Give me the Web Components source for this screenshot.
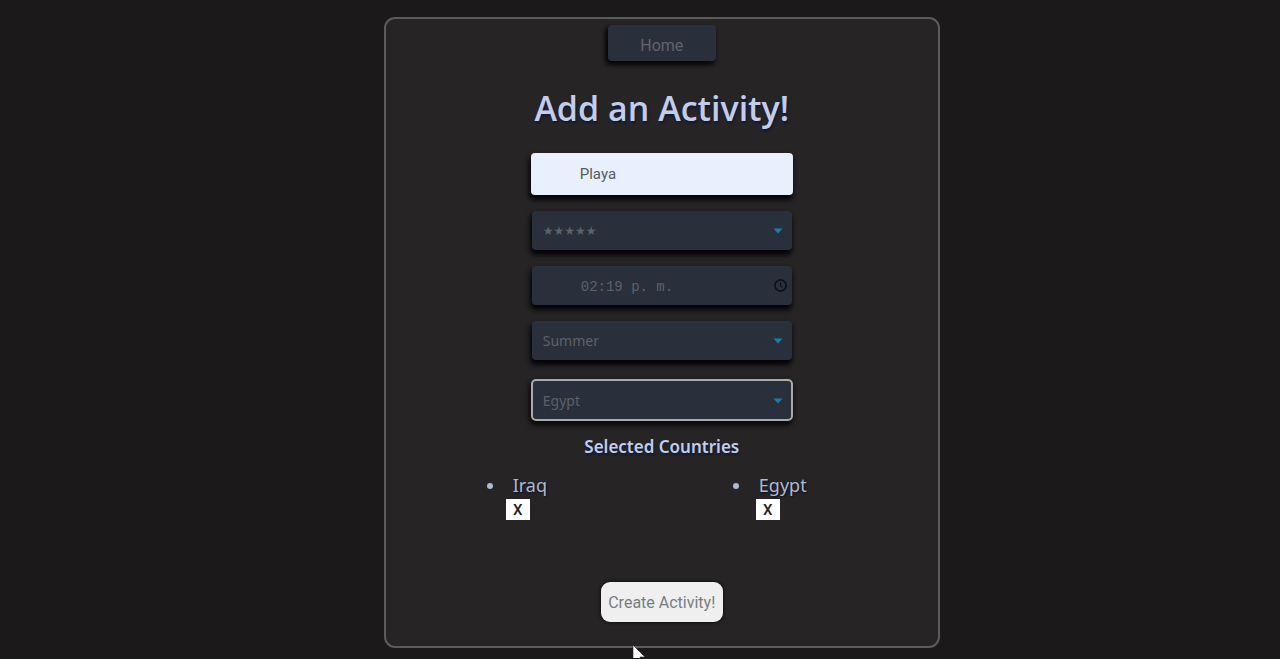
<!DOCTYPE html>
<html lang="en">
<head>
<meta charset="utf-8">
<title>Add an Activity</title>
<style>
html,body{margin:0;background:#1b191a}
body{font-family:"Noto Sans","Open Sans",sans-serif;color:#c3cdea}
</style>
</head>
<body>
<activity-page></activity-page>
<script>
const define = (name, html, setup) => {
  const t = document.createElement('template');
  t.innerHTML = html;
  customElements.define(name, class extends HTMLElement {
    constructor() {
      super();
      this.attachShadow({mode: 'open'}).append(t.content.cloneNode(true));
    }
    connectedCallback() { if (setup) setup(this, this.shadowRoot); }
  });
};

const field = `
:host{display:block;width:260px}
*{box-sizing:border-box}
.box{position:relative;display:flex;align-items:center;height:39px;border-radius:4px;background:#2a303b;box-shadow:-1px 4px 5px 1px #030408}
input,select{width:100%;height:100%;margin:0;border:0;outline:0;border-radius:4px;background:transparent;color:#5d6168;appearance:none}
`;

define('home-button', `<style>
:host{display:block}
button{display:block;width:108px;height:36px;padding:4px 0 0;border:0;border-radius:4px;background:#2a303b;color:#60646c;font:16px Roboto,sans-serif;box-shadow:-2px 3px 4px 1px #050508}
</style><button type="button"><slot></slot></button>`);

define('text-field', `<style>${field}
:host{width:262px}
.box{height:42px;background:#e8f0fe}
input{padding:0 49px;color:#555a62;font:15px Roboto,sans-serif}
</style><div class="box"><input type="text"></div>`, (el, r) => {
  const i = r.querySelector('input');
  i.value = el.getAttribute('value');
  i.setAttribute('aria-label', el.getAttribute('label'));
});

define('time-field', `<style>${field}
input{padding:2px 48px 0 49px;font:14px "Liberation Mono",monospace}
svg{position:absolute;right:4px;top:12px}
</style><div class="box"><input type="text"><svg width="15" height="15" viewBox="0 0 15 15" fill="none" stroke="#0d1118"><circle cx="7.5" cy="7.5" r="5.6" stroke-width="1.7"/><path d="M7.5 4.2v3.6l2.2 1.6" stroke-width="1.2"/></svg></div>`, (el, r) => {
  const i = r.querySelector('input');
  i.value = el.getAttribute('value');
  i.setAttribute('aria-label', el.getAttribute('label'));
});

define('select-field', `<style>${field}
:host([active]){width:262px;margin-top:3px}
:host([active]) .box{height:42px;border:2px solid #a9aca9;border-radius:5px;box-shadow:-1px 3px 5px 1px #08090b}
select{padding:0 32px 0 11px;font:14px "Noto Sans","DejaVu Sans",sans-serif}
:host([active]) select{padding-left:10px}
:host([rating]) select{font-size:12px}
svg{position:absolute;right:9px;top:17px;pointer-events:none}
:host([active]) svg{right:8px}
</style><div class="box"><select><option></option></select><svg width="10" height="6" viewBox="0 0 10 6"><path d="M.5 .5h9L5 5.5z" fill="#167fac"/></svg></div>`, (el, r) => {
  r.querySelector('option').textContent = el.getAttribute('value');
  r.querySelector('select').setAttribute('aria-label', el.getAttribute('label'));
});

define('country-item', `<style>
:host{display:list-item;list-style:disc;width:70px;color:#aeb9d2;font-size:18px;line-height:24px}
span{display:block;padding-left:7px;text-shadow:1px 1px 2px #0a1020}
button{display:block;width:24px;height:21px;margin:2px 0 0;padding:0;border:0;background:#fff;color:#202020;font:500 15px Roboto,sans-serif}
:host([wide]) button{margin-left:4px}
</style><span><slot></slot></span><button type="button">X</button>`);

define('create-button', `<style>
:host{display:block}
button{display:block;width:122px;height:40px;padding:0;border:0;border-radius:9px;background:#efeff0;color:#777c84;font:16px Roboto,sans-serif;box-shadow:0 0 3px 1px #111}
</style><button type="submit"><slot></slot></button>`);

define('mouse-pointer', `<style>
:host{position:absolute;left:632px;top:644px;height:15px;overflow:hidden;pointer-events:none}
svg{display:block}
</style><svg width="14" height="20" viewBox="0 0 14 20"><path d="M1 1v17l4-4 3 6 2-1-2-6h5z" fill="#fff" stroke="#222" stroke-width=".6"/></svg>`);

define('activity-page', `<style>
:host{display:block;position:relative;padding-top:17px;padding-bottom:10px}
*{box-sizing:border-box}
form{display:flex;flex-direction:column;align-items:center;width:43.4%;min-width:340px;margin:0 0 0 30%;padding:6px 0 24px;border:2px solid #5d5a5c;border-radius:11px;background:#272425}
h1{margin:22px 0 20px;font-family:"Open Sans",sans-serif;font-size:34px;line-height:50px;font-weight:600;text-shadow:1px 2px 2px #0b1a38}
.fields{display:flex;flex-direction:column;align-items:center;gap:16px}
h2{margin:14px 0;font-size:17px;line-height:24px;font-weight:600;text-shadow:1px 2px 2px #0b1a38}
.countries{display:flex;justify-content:space-around;width:90%;margin:0 0 62px;padding:0 0 0 4px}
</style>
<form>
<home-button>Home</home-button>
<h1>Add an Activity!</h1>
<div class="fields">
<text-field label="Name" value="Playa"></text-field>
<select-field label="Difficulty" value="★★★★★" rating></select-field>
<time-field label="Time" value="02:19 p. m."></time-field>
<select-field label="Season" value="Summer"></select-field>
<select-field label="Country" value="Egypt" active></select-field>
</div>
<h2>Selected Countries</h2>
<div class="countries" role="list"><country-item role="listitem">Iraq</country-item><country-item role="listitem" wide>Egypt</country-item></div>
<create-button>Create Activity!</create-button>
</form>
<mouse-pointer></mouse-pointer>`);
</script>
</body>
</html>
